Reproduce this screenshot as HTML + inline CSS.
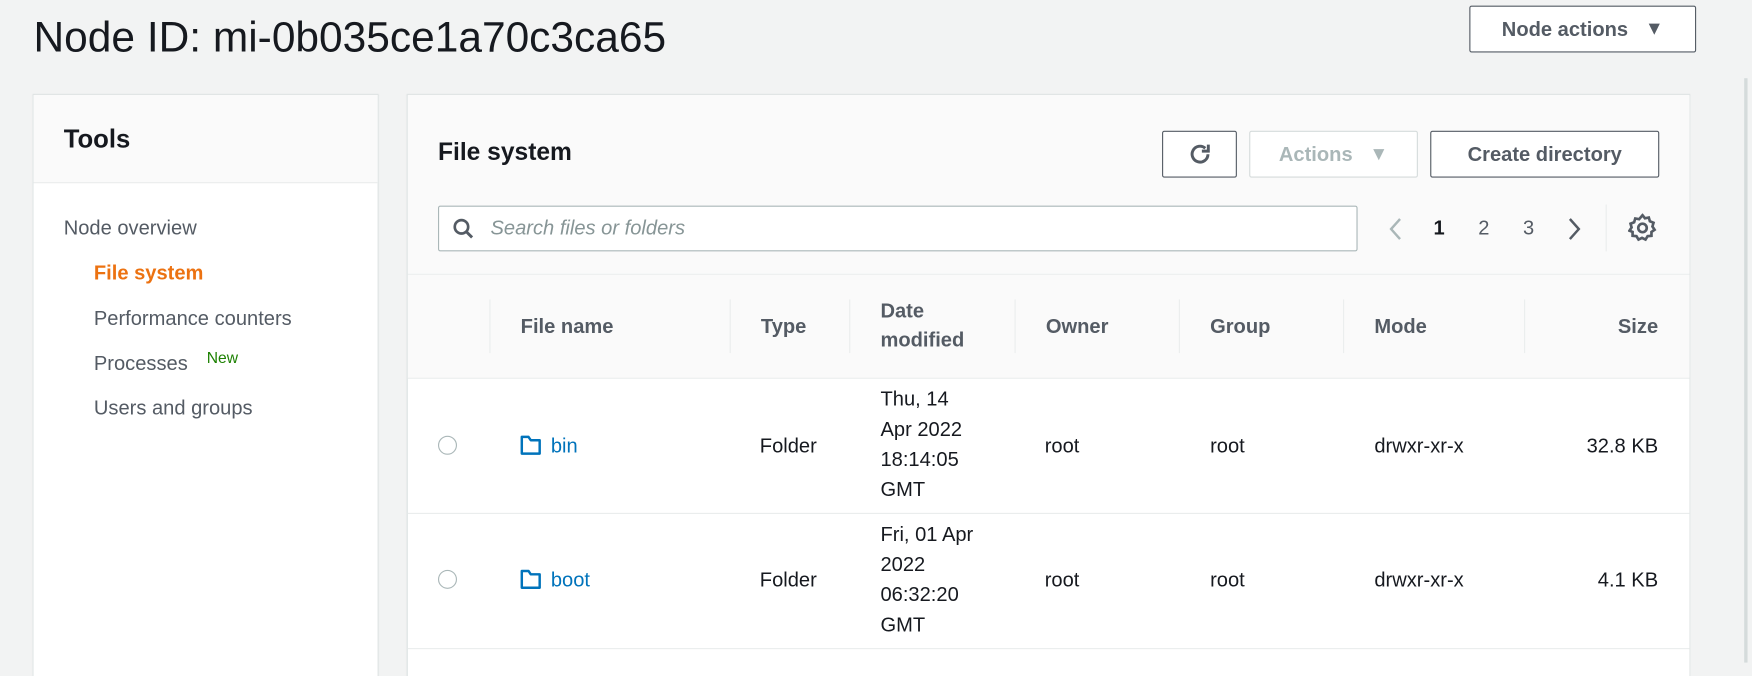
<!DOCTYPE html>
<html><head><meta charset="utf-8"><style>
html,body{margin:0;padding:0;width:1752px;height:662px;overflow:hidden;background:#f2f3f3;}
#s{position:absolute;left:0;top:0;width:1568px;height:593px;transform:scale(1.11735);transform-origin:0 0;font-family:"Liberation Sans",sans-serif;color:#16191f;}
.a{position:absolute;white-space:nowrap;}
.t{font-size:18px;line-height:26px;}
.b{font-weight:bold;}
.btn{position:absolute;border:1px solid #545b64;border-radius:2px;background:#fff;box-sizing:border-box;color:#545b64;font-weight:bold;font-size:18px;display:flex;align-items:center;justify-content:center;}
.hd{color:#545b64;font-weight:bold;font-size:18px;line-height:26px;}
.sep{position:absolute;width:1px;background:#eaeded;top:268px;height:48px;}
.hl{position:absolute;height:1px;background:#eaeded;}
.radio{position:absolute;width:17px;height:17px;border:1.5px solid #aab7b8;border-radius:50%;box-sizing:border-box;background:#fff;}
</style></head><body><div id="s">
<div class="a" style="left:30px;top:11px;font-size:38px;line-height:46px;color:#16191f;">Node ID: mi-0b035ce1a70c3ca65</div>
<div class="btn" style="left:1315px;top:5px;width:203px;height:42px;">Node actions&nbsp;&nbsp;&nbsp;<span style="font-size:17px">▼</span></div>
<div class="a" style="left:1561px;top:70px;width:3px;height:523px;background:#d5dbdb;"></div>

<!-- Tools panel -->
<div class="a" style="left:30px;top:85px;width:308px;height:520px;background:#fff;box-shadow:0 0 1px 1px #d5dbdb;"></div>
<div class="a" style="left:30px;top:85px;width:308px;height:78px;background:#fafafa;border-bottom:1px solid #eaeded;"></div>
<div class="a b" style="left:57px;top:110px;font-size:23px;line-height:28px;">Tools</div>
<div class="a t" style="left:57px;top:191px;color:#545b64;">Node overview</div>
<div class="a t b" style="left:84px;top:231px;color:#ec7211;">File system</div>
<div class="a t" style="left:84px;top:272px;color:#545b64;">Performance counters</div>
<div class="a t" style="left:84px;top:312px;color:#545b64;">Processes</div>
<div class="a" style="left:185px;top:311px;font-size:14px;line-height:18px;color:#1d8102;">New</div>
<div class="a t" style="left:84px;top:352px;color:#545b64;">Users and groups</div>

<!-- Main panel -->
<div class="a" style="left:365px;top:85px;width:1147px;height:520px;background:#fff;box-shadow:0 0 1px 1px #d5dbdb;"></div>
<div class="a" style="left:365px;top:85px;width:1147px;height:160px;background:#fafafa;"></div>
<div class="a b" style="left:392px;top:122px;font-size:22px;line-height:28px;">File system</div>
<div class="btn" style="left:1040px;top:117px;width:67px;height:42px;">
<svg width="24" height="24" viewBox="0 0 22 22"><path d="M17.5 11a6.5 6.5 0 1 1-2.2-4.9" fill="none" stroke="#545b64" stroke-width="2.4"/><path d="M17.8 3.2v5.3h-5.3" fill="none" stroke="#545b64" stroke-width="2.4"/></svg></div>
<div class="btn" style="left:1118px;top:117px;width:151px;height:42px;border-color:#d5dbdb;color:#aab7b8;">Actions&nbsp;&nbsp;&nbsp;<span style="font-size:17px">▼</span></div>
<div class="btn" style="left:1280px;top:117px;width:205px;height:42px;">Create directory</div>

<div class="a" style="left:392px;top:184px;width:823px;height:41px;border:1px solid #aab7b8;border-radius:2px;background:#fff;box-sizing:border-box;"></div>
<svg class="a" style="left:404px;top:194px" width="22" height="22" viewBox="0 0 22 22"><circle cx="9" cy="9" r="6" fill="none" stroke="#545b64" stroke-width="2.4"/><path d="M13.5 13.5l5 5" stroke="#545b64" stroke-width="2.6"/></svg>
<div class="a t" style="left:439px;top:191px;color:#879596;font-style:italic;">Search files or folders</div>

<svg class="a" style="left:1242px;top:194px" width="14" height="22" viewBox="0 0 14 22"><path d="M11 2L3 11l8 9" fill="none" stroke="#aab7b8" stroke-width="2.2"/></svg>
<div class="a t b" style="left:1283px;top:191px;color:#16191f;">1</div>
<div class="a t" style="left:1323px;top:191px;color:#545b64;">2</div>
<div class="a t" style="left:1363px;top:191px;color:#545b64;">3</div>
<svg class="a" style="left:1402px;top:194px" width="14" height="22" viewBox="0 0 14 22"><path d="M3 2l8 9-8 9" fill="none" stroke="#545b64" stroke-width="2.2"/></svg>
<div class="a" style="left:1437px;top:183px;width:1px;height:42px;background:#eaeded;"></div>
<svg class="a" style="left:1457px;top:191px" width="26" height="26" viewBox="0 0 24 24"><path d="M12 1.5l2 2.5 3.2-.6.9 3.1 3 1.2-.9 3.1 1.8 2.7-2.6 1.8v3.2l-3.2.3-1.7 2.8-2.9-1.4-2.9 1.4-1.7-2.8-3.2-.3v-3.2L1.2 14.3 3 11.6l-.9-3.1 3-1.2.9-3.1L9.2 4.8z" fill="none" stroke="#545b64" stroke-width="2.2"/><circle cx="12" cy="12" r="3.5" fill="none" stroke="#545b64" stroke-width="2.2"/></svg>

<!-- table header -->
<div class="hl" style="left:365px;top:245px;width:1147px;"></div>
<div class="a" style="left:365px;top:246px;width:1147px;height:92px;background:#fafafa;"></div>
<div class="hl" style="left:365px;top:338px;width:1147px;"></div>
<div class="sep" style="left:438px"></div><div class="sep" style="left:653px"></div><div class="sep" style="left:760px"></div><div class="sep" style="left:908px"></div><div class="sep" style="left:1055px"></div><div class="sep" style="left:1202px"></div><div class="sep" style="left:1364px"></div>
<div class="a hd" style="left:466px;top:279px;">File name</div>
<div class="a hd" style="left:681px;top:279px;">Type</div>
<div class="a hd" style="left:788px;top:265px;">Date</div>
<div class="a hd" style="left:788px;top:291px;">modified</div>
<div class="a hd" style="left:936px;top:279px;">Owner</div>
<div class="a hd" style="left:1083px;top:279px;">Group</div>
<div class="a hd" style="left:1230px;top:279px;">Mode</div>
<div class="a hd" style="right:84px;top:279px;">Size</div>

<!-- row 1 -->
<div class="radio" style="left:392px;top:390px;"></div>
<svg class="a" style="left:465px;top:389px" width="20" height="20" viewBox="0 0 20 20"><path d="M2 2h6l2 3h8v12H2z" fill="none" stroke="#0073bb" stroke-width="2.2" stroke-linejoin="round"/></svg>
<div class="a t" style="left:493px;top:386px;color:#0073bb;">bin</div>
<div class="a t" style="left:680px;top:386px;">Folder</div>
<div class="a t" style="left:788px;top:344px;line-height:27px;white-space:normal;">Thu, 14<br>Apr 2022<br>18:14:05<br>GMT</div>
<div class="a t" style="left:935px;top:386px;">root</div>
<div class="a t" style="left:1083px;top:386px;">root</div>
<div class="a t" style="left:1230px;top:386px;">drwxr-xr-x</div>
<div class="a t" style="right:84px;top:386px;">32.8 KB</div>
<div class="hl" style="left:365px;top:459px;width:1147px;"></div>

<!-- row 2 -->
<div class="radio" style="left:392px;top:510px;"></div>
<svg class="a" style="left:465px;top:509px" width="20" height="20" viewBox="0 0 20 20"><path d="M2 2h6l2 3h8v12H2z" fill="none" stroke="#0073bb" stroke-width="2.2" stroke-linejoin="round"/></svg>
<div class="a t" style="left:493px;top:506px;color:#0073bb;">boot</div>
<div class="a t" style="left:680px;top:506px;">Folder</div>
<div class="a t" style="left:788px;top:465px;line-height:27px;white-space:normal;">Fri, 01 Apr<br>2022<br>06:32:20<br>GMT</div>
<div class="a t" style="left:935px;top:506px;">root</div>
<div class="a t" style="left:1083px;top:506px;">root</div>
<div class="a t" style="left:1230px;top:506px;">drwxr-xr-x</div>
<div class="a t" style="right:84px;top:506px;">4.1 KB</div>
<div class="hl" style="left:365px;top:580px;width:1147px;"></div>
</div></body></html>
